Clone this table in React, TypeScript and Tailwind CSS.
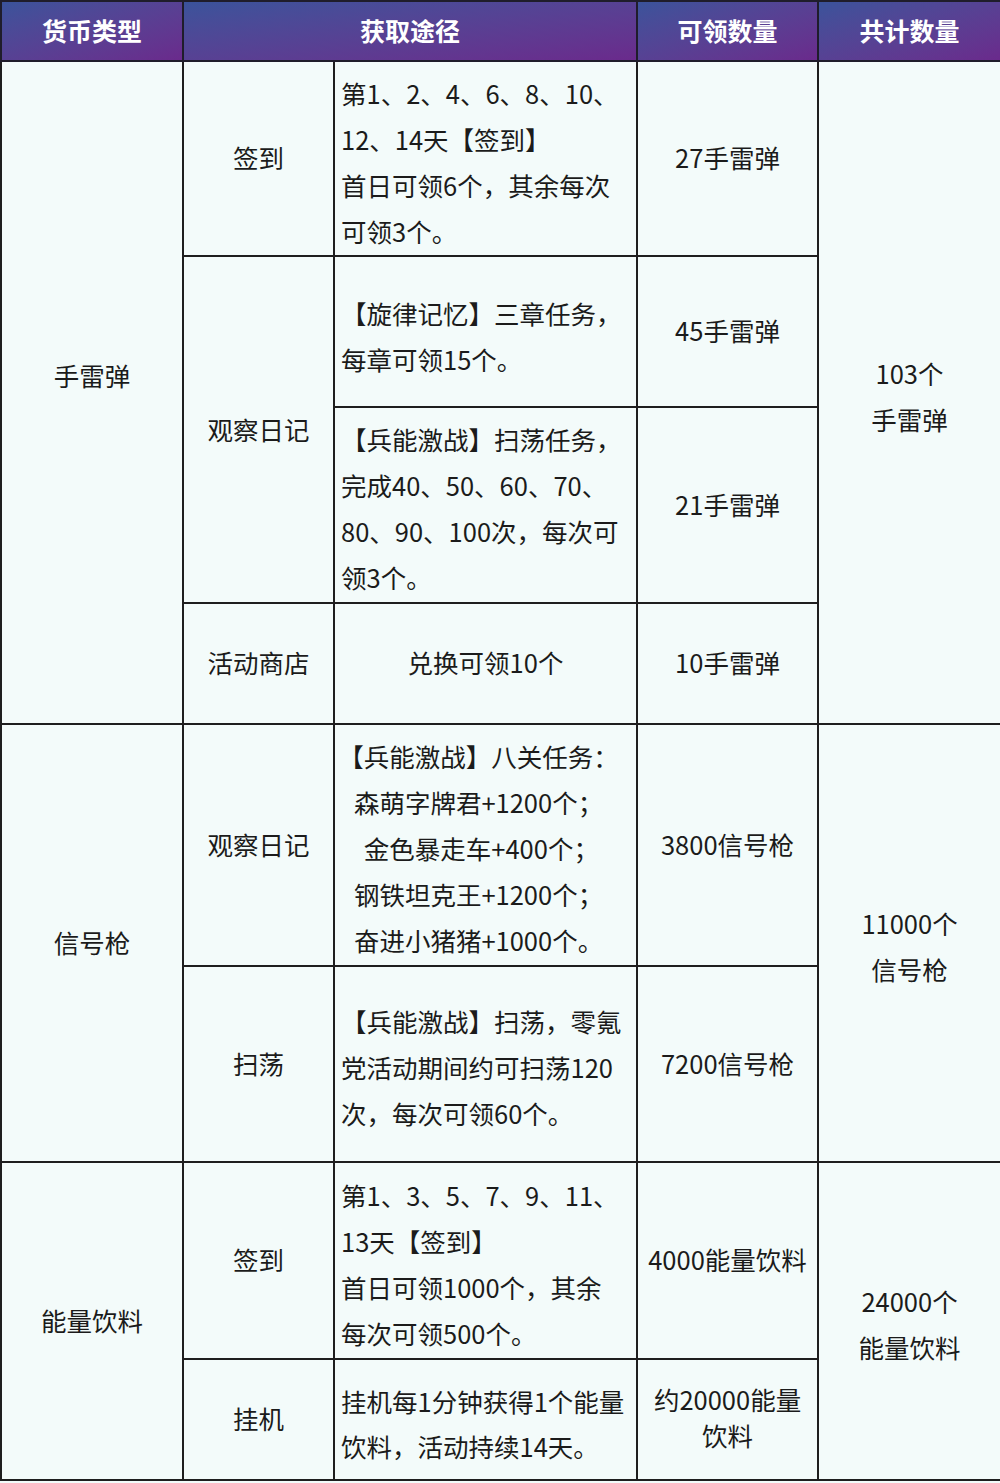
const font = { fontFamily: '"Noto Sans CJK SC", "Noto Sans", sans-serif' };

const th =
  "border-2 border-[#1f1d2b] bg-gradient-to-br from-[#3a539b] to-[#6a2a8c] text-white font-bold text-[25px] text-center align-middle";
const td = "border-2 border-[#1e1e1e] text-[#1b1b1b] text-[25.5px] align-middle";

const Lines = ({ lines, className = "leading-[46px]" }: { lines: string[]; className?: string }) => (
  <div className={className}>
    {lines.map((l, i) => (
      <div key={i} className="whitespace-pre">
        {l}
      </div>
    ))}
  </div>
);

export default function App() {
  return (
    <div className="w-[1000px] h-[1483px] bg-[#f3fbfa]" style={font}>
      <table className="w-[1000px] border-collapse table-fixed">
        <colgroup>
          <col className="w-[182px]" />
          <col className="w-[151px]" />
          <col className="w-[303px]" />
          <col className="w-[181px]" />
          <col className="w-[183px]" />
        </colgroup>
        <thead>
          <tr className="h-[60px]">
            <th className={th}>货币类型</th>
            <th className={th} colSpan={2}>
              获取途径
            </th>
            <th className={th}>可领数量</th>
            <th className={th}>共计数量</th>
          </tr>
        </thead>
        <tbody>
          {/* 手雷弹 */}
          <tr className="h-[195px]">
            <td className={`${td} text-center`} rowSpan={4}>
              <div className="pb-[34px]">手雷弹</div>
            </td>
            <td className={`${td} text-center`}>
              <div className="pb-[2px]">签到</div>
            </td>
            <td className={`${td} pl-[6px] pt-[6px]`}>
              <Lines lines={["第1、2、4、6、8、10、", "12、14天【签到】", "首日可领6个，其余每次", "可领3个。"]} />
            </td>
            <td className={`${td} text-center`}>
              <div className="pb-[2px]">27手雷弹</div>
            </td>
            <td className={`${td} text-center pt-[6px]`} rowSpan={4}>
              <Lines lines={["103个", "手雷弹"]} />
            </td>
          </tr>
          <tr className="h-[151px]">
            <td className={`${td} text-center`} rowSpan={2}>
              观察日记
            </td>
            <td className={`${td} pl-[6px] pt-[8px]`}>
              <Lines lines={["【旋律记忆】三章任务，", "每章可领15个。"]} />
            </td>
            <td className={`${td} text-center`}>
              <div className="pb-[2px]">45手雷弹</div>
            </td>
          </tr>
          <tr className="h-[196px]">
            <td className={`${td} pl-[6px] pt-[6px]`}>
              <Lines lines={["【兵能激战】扫荡任务，", "完成40、50、60、70、", "80、90、100次，每次可", "领3个。"]} />
            </td>
            <td className={`${td} text-center`}>
              <div className="pb-[2px]">21手雷弹</div>
            </td>
          </tr>
          <tr className="h-[121px]">
            <td className={`${td} text-center`}>
              <div className="pb-[2px]">活动商店</div>
            </td>
            <td className={`${td} text-center`}>
              <div className="pb-[2px]">兑换可领10个</div>
            </td>
            <td className={`${td} text-center`}>
              <div className="pb-[2px]">10手雷弹</div>
            </td>
          </tr>

          {/* 信号枪 */}
          <tr className="h-[242px]">
            <td className={`${td} text-center`} rowSpan={2}>
              <div className="pb-[2px]">信号枪</div>
            </td>
            <td className={`${td} text-center`}>
              <div className="pb-[2px]">观察日记</div>
            </td>
            <td className={`${td} text-center pr-[14px] pt-[6px]`}>
              <Lines
                lines={["【兵能激战】八关任务：", "森萌字牌君+1200个；", " 金色暴走车+400个；", "钢铁坦克王+1200个；", "奋进小猪猪+1000个。"]}
              />
            </td>
            <td className={`${td} text-center`}>
              <div className="pb-[2px]">3800信号枪</div>
            </td>
            <td className={`${td} text-center pt-[6px]`} rowSpan={2}>
              <Lines lines={["11000个", "信号枪"]} />
            </td>
          </tr>
          <tr className="h-[196px]">
            <td className={`${td} text-center`}>
              <div className="pb-[2px]">扫荡</div>
            </td>
            <td className={`${td} pl-[6px] pt-[6px]`}>
              <Lines lines={["【兵能激战】扫荡，零氪", "党活动期间约可扫荡120", "次，每次可领60个。"]} />
            </td>
            <td className={`${td} text-center`}>
              <div className="pb-[2px]">7200信号枪</div>
            </td>
          </tr>

          {/* 能量饮料 */}
          <tr className="h-[197px]">
            <td className={`${td} text-center`} rowSpan={2}>
              <div className="pb-[2px]">能量饮料</div>
            </td>
            <td className={`${td} text-center`}>
              <div className="pb-[2px]">签到</div>
            </td>
            <td className={`${td} pl-[6px] pt-[6px]`}>
              <Lines lines={["第1、3、5、7、9、11、", "13天【签到】", "首日可领1000个，其余", "每次可领500个。"]} />
            </td>
            <td className={`${td} text-center`}>
              <div className="pb-[2px]">4000能量饮料</div>
            </td>
            <td className={`${td} text-center pt-[6px]`} rowSpan={2}>
              <Lines lines={["24000个", "能量饮料"]} />
            </td>
          </tr>
          <tr className="h-[121px]">
            <td className={`${td} text-center`}>
              <div className="pb-[2px]">挂机</div>
            </td>
            <td className={`${td} pl-[6px] pt-[6px]`}>
              <Lines className="leading-[45px]" lines={["挂机每1分钟获得1个能量", "饮料，活动持续14天。"]} />
            </td>
            <td className={`${td} text-center`}>
              <Lines className="leading-[36px] pb-[6px]" lines={["约20000能量", "饮料"]} />
            </td>
          </tr>
        </tbody>
      </table>
    </div>
  );
}
